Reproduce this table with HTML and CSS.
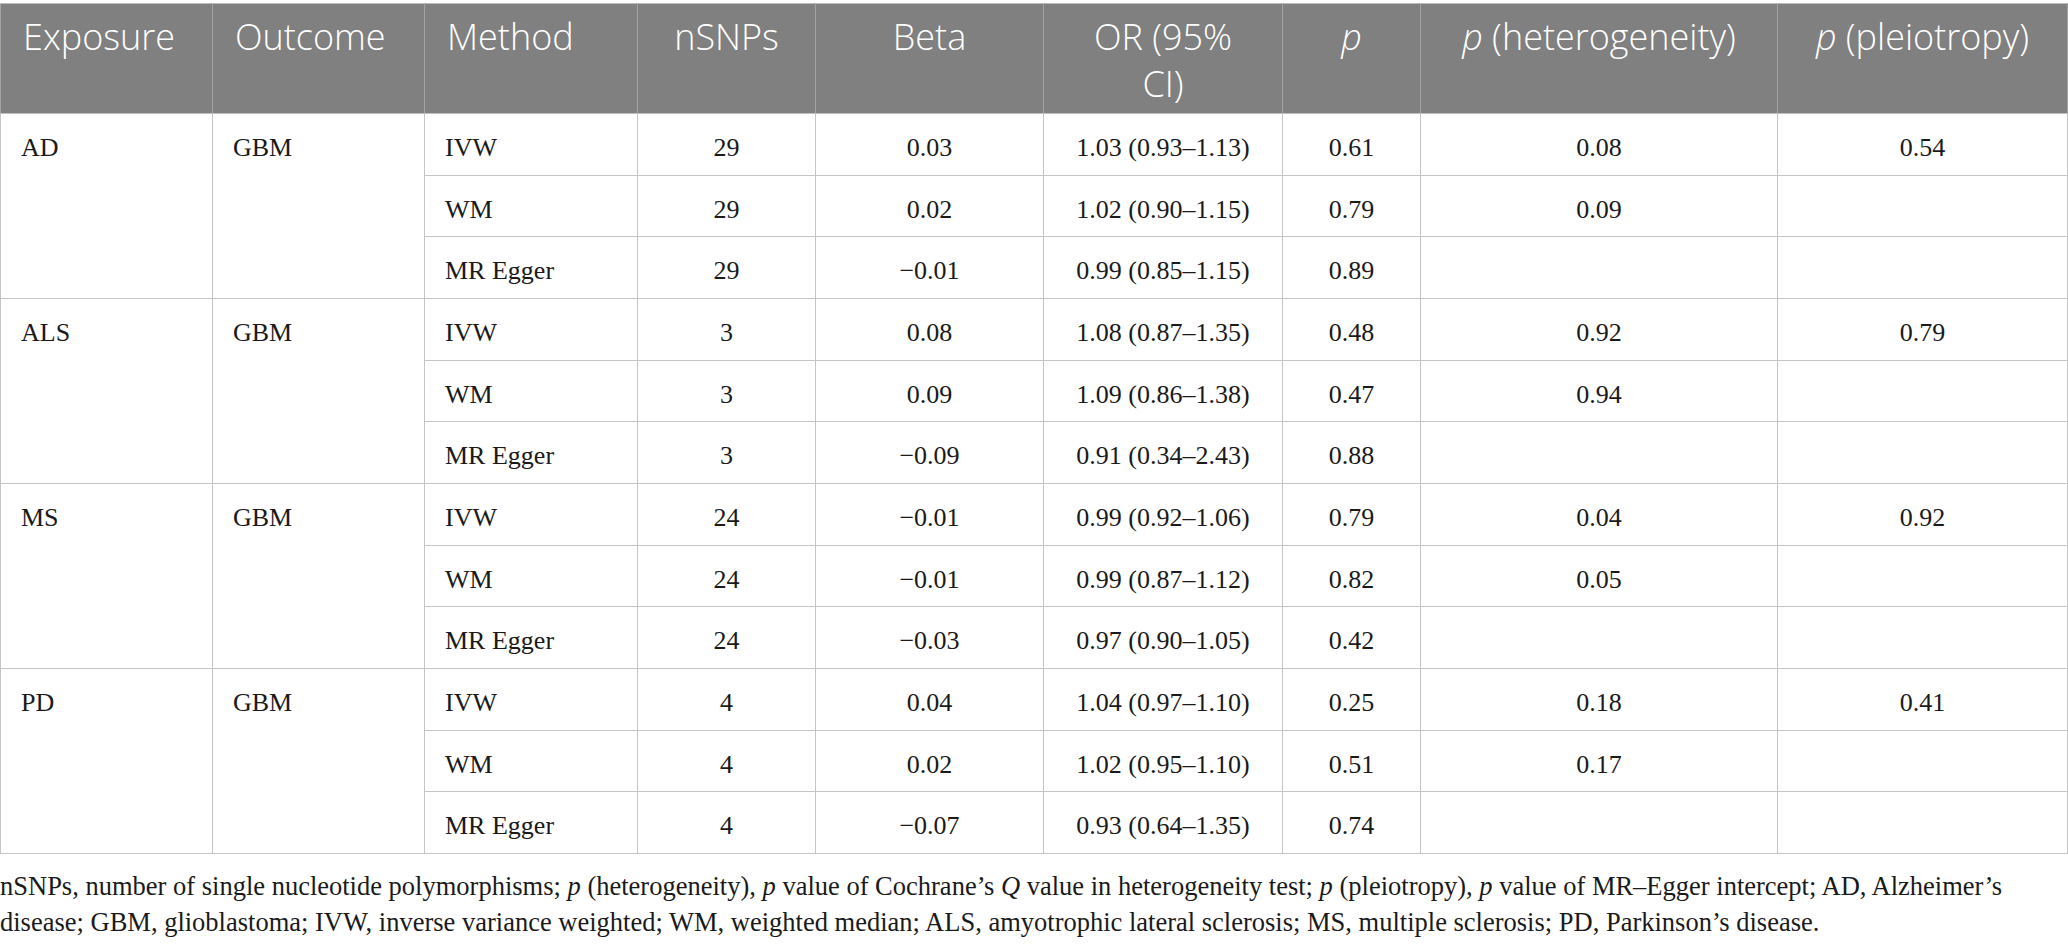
FILE: index.html
```html
<!DOCTYPE html>
<html lang="en">
<head>
    <meta charset="UTF-8">
    <meta name="viewport" content="width=device-width, initial-scale=1.0">
    <title>MR results</title>
    <link rel="stylesheet" href="styles.css">
</head>
<body>

<table class="mr-table">
    <colgroup>
        <col class="c-exp">
        <col class="c-out">
        <col class="c-met">
        <col class="c-snp">
        <col class="c-beta">
        <col class="c-or">
        <col class="c-p">
        <col class="c-het">
        <col class="c-ple">
    </colgroup>
    <thead>
        <tr>
            <th class="left">Exposure</th>
            <th class="left">Outcome</th>
            <th class="left">Method</th>
            <th>nSNPs</th>
            <th>Beta</th>
            <th>OR (95%<br>CI)</th>
            <th><i>p</i></th>
            <th><i>p</i> (heterogeneity)</th>
            <th><i>p</i> (pleiotropy)</th>
        </tr>
    </thead>
    <tbody>
        <!-- AD -->
        <tr>
            <td class="left" rowspan="3">AD</td>
            <td class="left" rowspan="3">GBM</td>
            <td class="left">IVW</td>
            <td>29</td>
            <td>0.03</td>
            <td>1.03 (0.93–1.13)</td>
            <td>0.61</td>
            <td>0.08</td>
            <td>0.54</td>
        </tr>
        <tr>
            <td class="left">WM</td>
            <td>29</td>
            <td>0.02</td>
            <td>1.02 (0.90–1.15)</td>
            <td>0.79</td>
            <td>0.09</td>
            <td></td>
        </tr>
        <tr>
            <td class="left">MR Egger</td>
            <td>29</td>
            <td>−0.01</td>
            <td>0.99 (0.85–1.15)</td>
            <td>0.89</td>
            <td></td>
            <td></td>
        </tr>
        <!-- ALS -->
        <tr>
            <td class="left" rowspan="3">ALS</td>
            <td class="left" rowspan="3">GBM</td>
            <td class="left">IVW</td>
            <td>3</td>
            <td>0.08</td>
            <td>1.08 (0.87–1.35)</td>
            <td>0.48</td>
            <td>0.92</td>
            <td>0.79</td>
        </tr>
        <tr>
            <td class="left">WM</td>
            <td>3</td>
            <td>0.09</td>
            <td>1.09 (0.86–1.38)</td>
            <td>0.47</td>
            <td>0.94</td>
            <td></td>
        </tr>
        <tr>
            <td class="left">MR Egger</td>
            <td>3</td>
            <td>−0.09</td>
            <td>0.91 (0.34–2.43)</td>
            <td>0.88</td>
            <td></td>
            <td></td>
        </tr>
        <!-- MS -->
        <tr>
            <td class="left" rowspan="3">MS</td>
            <td class="left" rowspan="3">GBM</td>
            <td class="left">IVW</td>
            <td>24</td>
            <td>−0.01</td>
            <td>0.99 (0.92–1.06)</td>
            <td>0.79</td>
            <td>0.04</td>
            <td>0.92</td>
        </tr>
        <tr>
            <td class="left">WM</td>
            <td>24</td>
            <td>−0.01</td>
            <td>0.99 (0.87–1.12)</td>
            <td>0.82</td>
            <td>0.05</td>
            <td></td>
        </tr>
        <tr>
            <td class="left">MR Egger</td>
            <td>24</td>
            <td>−0.03</td>
            <td>0.97 (0.90–1.05)</td>
            <td>0.42</td>
            <td></td>
            <td></td>
        </tr>
        <!-- PD -->
        <tr>
            <td class="left" rowspan="3">PD</td>
            <td class="left" rowspan="3">GBM</td>
            <td class="left">IVW</td>
            <td>4</td>
            <td>0.04</td>
            <td>1.04 (0.97–1.10)</td>
            <td>0.25</td>
            <td>0.18</td>
            <td>0.41</td>
        </tr>
        <tr>
            <td class="left">WM</td>
            <td>4</td>
            <td>0.02</td>
            <td>1.02 (0.95–1.10)</td>
            <td>0.51</td>
            <td>0.17</td>
            <td></td>
        </tr>
        <tr>
            <td class="left">MR Egger</td>
            <td>4</td>
            <td>−0.07</td>
            <td>0.93 (0.64–1.35)</td>
            <td>0.74</td>
            <td></td>
            <td></td>
        </tr>
    </tbody>
</table>

<p class="note">nSNPs, number of single nucleotide polymorphisms; <i>p</i> (heterogeneity), <i>p</i> value of Cochrane’s <i>Q</i> value in heterogeneity test; <i>p</i> (pleiotropy), <i>p</i> value of MR–Egger intercept; AD, Alzheimer’s<br>disease; GBM, glioblastoma; IVW, inverse variance weighted; WM, weighted median; ALS, amyotrophic lateral sclerosis; MS, multiple sclerosis; PD, Parkinson’s disease.</p>

</body>
</html>
```

FILE: styles.css
```css
body {
    margin: 0;
    padding-top: 3px;
    background: #ffffff;
    color: #1a1a1a;
    font-family: "Liberation Serif", "Times New Roman", serif;
}
.mr-table {
    width: 2068px;
    border-collapse: collapse;
    table-layout: fixed;
    border: 1px solid #bdbdbd;
}
.c-exp { width: 212px; }
.c-out { width: 212px; }
.c-met { width: 213px; }
.c-snp { width: 178px; }
.c-beta { width: 228px; }
.c-or { width: 239px; }
.c-p { width: 138px; }
.c-het { width: 357px; }
.c-ple { width: 290px; }

.mr-table th {
    background-color: #808080;
    color: #ffffff;
    font-family: "Open Sans", "Liberation Sans", sans-serif;
    font-weight: 300;
    font-size: 36px;
    line-height: 47px;
    text-align: center;
    vertical-align: top;
    padding: 9px 8px 6px;
    border: 1px solid #a3a3a3;
    border-top-color: #bdbdbd;
    border-bottom-color: #bdbdbd;
}
.mr-table th.left {
    text-align: left;
    padding-left: 22px;
}
.mr-table td {
    font-size: 26px;
    line-height: 30px;
    text-align: center;
    vertical-align: top;
    padding: 19px 20px 11.67px;
    border: 1px solid #c4c4c4;
}
.mr-table td.left {
    text-align: left;
    padding-left: 20px;
}
.note {
    margin: 14px 0 0;
    font-size: 26.5px;
    line-height: 36px;
    color: #1a1a1a;
}
```
